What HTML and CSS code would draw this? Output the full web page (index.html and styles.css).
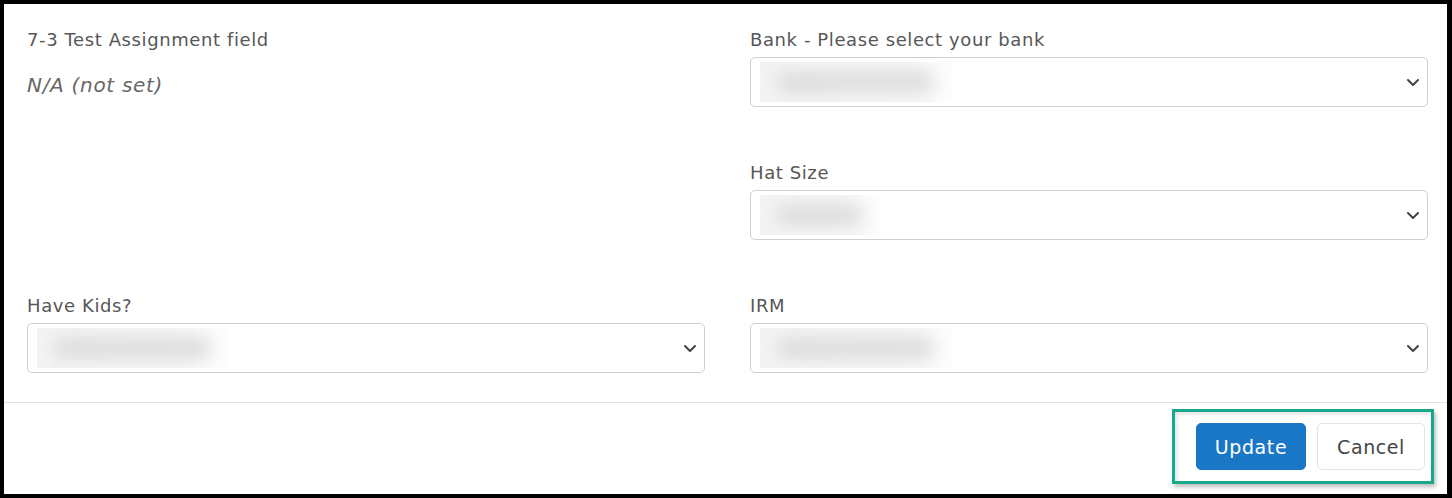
FILE: index.html
```html
<!DOCTYPE html>
<html>
<head>
<meta charset="utf-8">
<link rel="stylesheet" href="styles.css">
</head>
<body>
<div class="frame">
  <div class="form-grid">
    <div class="field">
      <div class="label">7-3 Test Assignment field</div>
      <div class="value">N/A (not set)</div>
    </div>
    <div class="field">
      <div class="label">Bank - Please select your bank</div>
      <div class="select">
        <div class="redacted wide"><span class="smudge"></span></div>
        <svg class="chev" width="14" height="9" viewBox="0 0 14 9"><path d="M2 2 L7 7 L12 2" fill="none" stroke="#444" stroke-width="2" stroke-linecap="round" stroke-linejoin="round"/></svg>
      </div>
    </div>
    <div class="field empty"></div>
    <div class="field">
      <div class="label">Hat Size</div>
      <div class="select">
        <div class="redacted narrow"><span class="smudge"></span></div>
        <svg class="chev" width="14" height="9" viewBox="0 0 14 9"><path d="M2 2 L7 7 L12 2" fill="none" stroke="#444" stroke-width="2" stroke-linecap="round" stroke-linejoin="round"/></svg>
      </div>
    </div>
    <div class="field">
      <div class="label">Have Kids?</div>
      <div class="select">
        <div class="redacted wide"><span class="smudge"></span></div>
        <svg class="chev" width="14" height="9" viewBox="0 0 14 9"><path d="M2 2 L7 7 L12 2" fill="none" stroke="#444" stroke-width="2" stroke-linecap="round" stroke-linejoin="round"/></svg>
      </div>
    </div>
    <div class="field">
      <div class="label">IRM</div>
      <div class="select">
        <div class="redacted wide"><span class="smudge"></span></div>
        <svg class="chev" width="14" height="9" viewBox="0 0 14 9"><path d="M2 2 L7 7 L12 2" fill="none" stroke="#444" stroke-width="2" stroke-linecap="round" stroke-linejoin="round"/></svg>
      </div>
    </div>
  </div>
  <div class="footer">
    <div class="highlight">
      <button class="btn primary">Update</button>
      <button class="btn secondary">Cancel</button>
    </div>
  </div>
</div>
</body>
</html>
```

FILE: styles.css
```css
* { box-sizing: border-box; }
html, body { margin: 0; padding: 0; background: #000; }
body {
  width: 1452px;
  height: 498px;
  font-family: "DejaVu Sans", "Liberation Sans", sans-serif;
  color: #555;
}
.frame {
  margin: 4px 5px 4px 4px;
  height: 490px;
  background: #fff;
  display: flex;
  flex-direction: column;
}
.form-grid {
  display: grid;
  grid-template-columns: 1fr 1fr;
  grid-template-rows: repeat(3, 80px);
  align-content: start;
  column-gap: 45px;
  row-gap: 53px;
  padding: 23px 19px 0 23px;
  height: 398px;
}
.field { display: flex; flex-direction: column; }
.label {
  font-size: 18px;
  letter-spacing: 0.6px;
  line-height: 25px;
  color: #575757;
  margin-bottom: 5px;
}
.value {
  font-size: 20px;
  font-style: italic;
  letter-spacing: 0.7px;
  color: #666;
  line-height: 28px;
  margin-top: 14px;
}
.select {
  height: 50px;
  border: 1px solid #cfcfcf;
  border-radius: 5px;
  display: flex;
  align-items: center;
  justify-content: space-between;
  padding: 0 7px 0 9px;
}
.redacted {
  height: 40px;
  position: relative;
  overflow: hidden;
  background: linear-gradient(to right, #f3f3f3, #f6f6f6 75%, #fdfdfd);
}
.redacted.wide { width: 192px; }
.redacted.narrow { width: 120px; }
.smudge {
  position: absolute;
  left: 16px;
  right: 18px;
  top: 9px;
  bottom: 9px;
  background: #dedede;
  border-radius: 12px;
  filter: blur(8px);
}
.chev { display: block; }
.footer {
  border-top: 1px solid #e2e2e2;
  flex: 1;
  display: flex;
  justify-content: flex-end;
  align-items: flex-start;
  padding: 6px 13px 0 0;
}
.highlight {
  border: 3px solid #17a98a;
  width: 262px;
  height: 75px;
  display: flex;
  align-items: center;
  gap: 11px;
  padding: 0 6px 0 21px;
  box-shadow: 2px 3px 4px rgba(0,0,0,0.25), inset 2px 2px 4px rgba(0,0,0,0.12);
}
.btn {
  height: 47px;
  padding-top: 2px;
  font-family: "DejaVu Sans", "Liberation Sans", sans-serif;
  font-size: 19px;
  letter-spacing: 0.6px;
  border-radius: 5px;
  cursor: pointer;
}
.primary {
  width: 110px;
  background: #1a77c6;
  color: #fff;
  border: 1px solid #1a77c6;
}
.secondary {
  width: 108px;
  background: #fff;
  color: #444;
  border: 1px solid #e4e4e4;
}
```
